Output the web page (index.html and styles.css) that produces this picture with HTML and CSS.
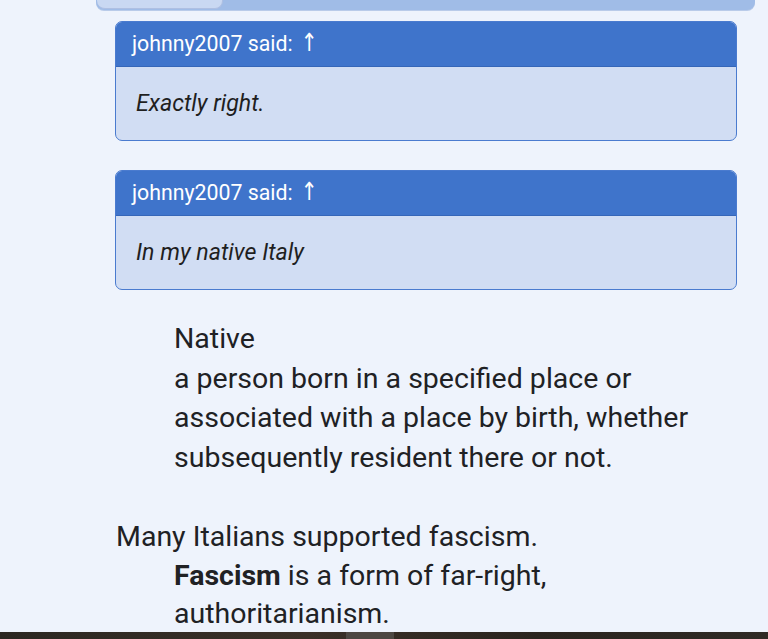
FILE: index.html
```html
<!DOCTYPE html>
<html>
<head>
<meta charset="utf-8">
<link rel="stylesheet" href="styles.css">
</head>
<body>
<div class="topbar"><div class="tab"></div></div>
<div class="content">
  <div class="quote">
    <div class="quote-head">johnny2007 said: <span class="arrow">↑</span></div>
    <div class="quote-body">Exactly right.</div>
  </div>
  <div class="quote">
    <div class="quote-head">johnny2007 said: <span class="arrow">↑</span></div>
    <div class="quote-body">In my native Italy</div>
  </div>
  <div class="indent">
    <div>Native</div>
    <div>a person born in a specified place or associated with a place by birth, whether subsequently resident there or not.</div>
  </div>
  <p class="para">Many Italians supported fascism.</p>
  <div class="indent tight"><b>Fascism</b> is a form of far-right, authoritarianism.</div>
</div>
<div class="bottombar"><div class="seg"></div></div>
</body>
</html>
```
FILE: styles.css
```css
html, body {
  margin: 0;
  padding: 0;
  height: 639px;
  overflow: hidden;
}
body {
  background: #eef3fc;
  font-family: Roboto, "Noto Sans", sans-serif;
  color: #202124;
  position: relative;
}
.topbar {
  margin-left: 96px;
  width: 659px;
  height: 10px;
  background: #a0bce7;
  border-radius: 0 0 8px 8px;
  box-shadow: 0 1px 0 #b9cbe9;
}
.tab {
  width: 125px;
  height: 8px;
  margin-left: 1px;
  background: #c9d8f2;
  border-radius: 0 0 8px 8px;
  border-bottom: 1px solid #aebfe2;
  border-right: 1px solid #aebfe2;
}
.content {
  margin-left: 115px;
  width: 622px;
  padding-top: 11px;
}
.quote {
  border: 1px solid #4a7bcf;
  border-radius: 7px;
  overflow: hidden;
  margin-bottom: 29px;
  background: #d1ddf3;
}
.quote-head {
  background: #3f74cb;
  color: #ffffff;
  font-size: 21.3px;
  height: 44px;
  line-height: 44px;
  padding-left: 16px;
  border-bottom: 1px solid #3566b8;
}
.arrow {
  font-family: "DejaVu Sans", sans-serif;
  font-size: 25px;
  line-height: 1;
  margin-left: 1px;
  display: inline-block;
  transform: scaleX(0.8);
}
.quote-body {
  font-style: italic;
  font-size: 23.2px;
  height: 73px;
  line-height: 72px;
  padding-left: 20px;
  color: #1f1f1f;
}
.indent {
  margin-left: 59px;
  font-size: 28.5px;
  line-height: 39.6px;
  width: 530px;
}
.para {
  margin: 40px 0 0 1px;
  font-size: 28.5px;
  line-height: 39.5px;
}
.tight {
  line-height: 38.5px;
}
.bottombar {
  position: absolute;
  left: 0;
  bottom: 0;
  width: 768px;
  height: 7px;
  background: linear-gradient(90deg, #2b2721, #3a3028 40%, #2a241e 70%, #2f2a25);
}
.seg {
  position: absolute;
  left: 346px;
  top: 0;
  width: 48px;
  height: 7px;
  background: #4c4742;
}
```
